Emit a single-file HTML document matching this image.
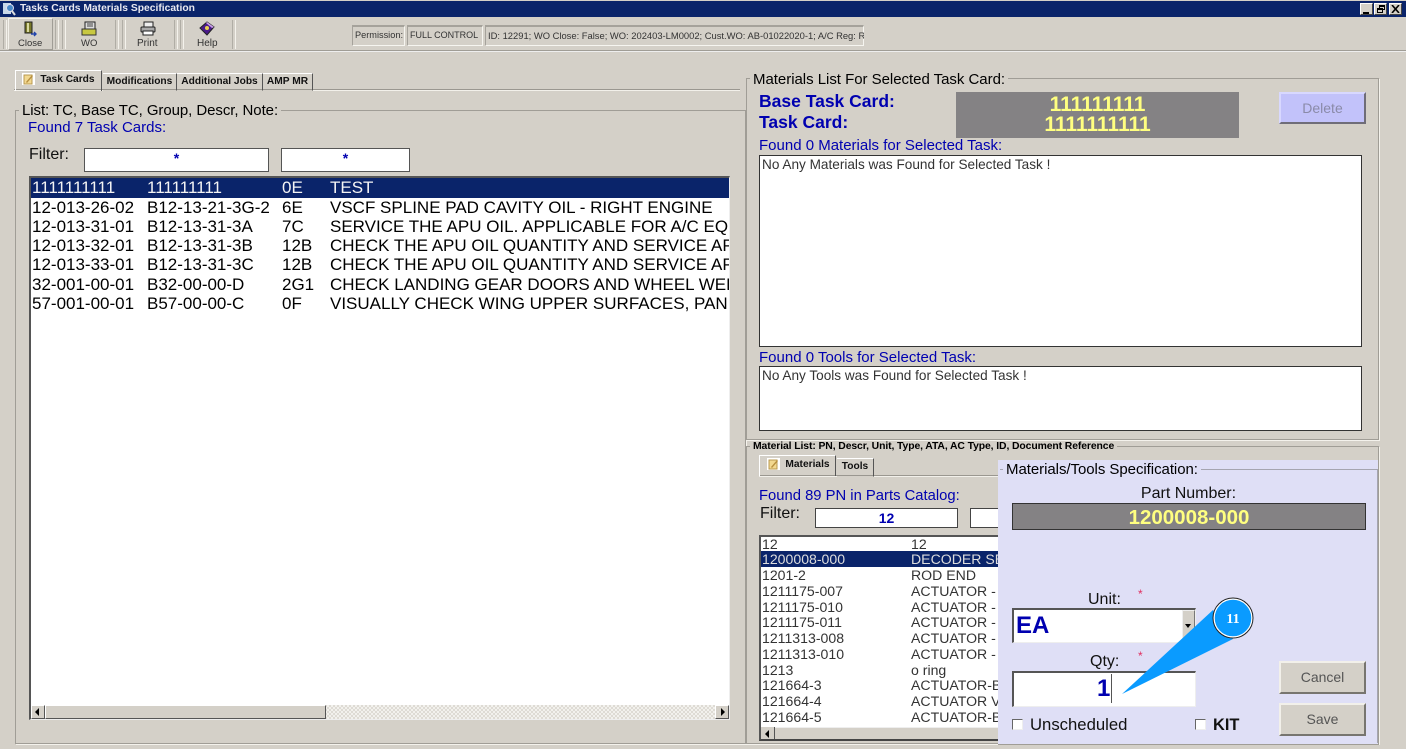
<!DOCTYPE html>
<html><head><meta charset="utf-8"><style>
html,body{margin:0;padding:0;width:1406px;height:749px;overflow:hidden;background:#d4d0c8;font-family:"Liberation Sans",sans-serif}
.a{position:absolute;box-sizing:border-box}
.t{position:absolute;white-space:nowrap;line-height:1}
.in{position:absolute;box-sizing:border-box;background:#fff;border:1px solid #555;border-right-color:#bbb;border-bottom-color:#eee;border-top:2px solid #555;border-left:2px solid #555}
.f{position:absolute;box-sizing:border-box;border:1px solid #a09d96;box-shadow:1px 1px 0 #f4f2ec}
.fd{position:absolute;box-sizing:border-box;border:1px solid;border-color:#a5a29b #f6f5f0 #f6f5f0 #a5a29b;border-top-width:2px}
.btn{position:absolute;box-sizing:border-box;border:2px solid;border-color:#f2f0ea #77756f #77756f #f2f0ea;background:#d4d0c8;text-align:center;color:#555;font-size:14px;line-height:28px}
.tb{position:absolute;top:20px;width:2px;height:29px;border-left:1px solid #b0ada5;border-right:1px solid #f4f2ec}
.lb{position:absolute;color:#000;font-size:15px;line-height:1;white-space:nowrap;background:#d4d0c8;padding:0 3px}
.row{position:absolute;height:19px;color:#000;font-size:17px;line-height:19px;white-space:nowrap;overflow:hidden}
.row span{position:absolute;top:0}
.r2{position:absolute;left:0;height:16px;width:300px;font-size:14.1px;line-height:16px;color:#333;white-space:nowrap;overflow:hidden}
.r2 span{position:absolute;top:0}
.tab{position:absolute;font-weight:bold;font-size:10.2px;color:#111;text-align:center;border:1px solid;border-color:#fff #555 #d4d0c8 #fff;white-space:nowrap}
</style></head><body>

<!-- title bar -->
<div class="a" style="left:0;top:1px;width:1406px;height:16px;background:#0a246a"></div>
<svg class="a" style="left:2px;top:2px" width="14" height="14" viewBox="0 0 14 14"><rect x="1" y="1" width="8" height="11" fill="#c8d8e8"/><circle cx="8" cy="6" r="3.5" fill="#4a8ac8" stroke="#dde"/><path d="M10 9l3 4" stroke="#ddd" stroke-width="2"/></svg>
<div class="t" style="left:20px;top:4px;font-size:10.3px;font-weight:bold;color:#e8e8f0">Tasks Cards Materials Specification</div>
<div class="a" style="left:1360px;top:3px;width:13px;height:12px;background:#d4d0c8;border:1px solid;border-color:#fff #444 #444 #fff"><div class="a" style="left:2px;top:8px;width:6px;height:2px;background:#000"></div></div>
<div class="a" style="left:1374px;top:3px;width:13px;height:12px;background:#d4d0c8;border:1px solid;border-color:#fff #444 #444 #fff"><div class="a" style="left:4px;top:1px;width:6px;height:5px;border:1px solid #000;border-top-width:2px"></div><div class="a" style="left:2px;top:4px;width:6px;height:5px;border:1px solid #000;border-top-width:2px;background:#d4d0c8"></div></div>
<div class="a" style="left:1389px;top:3px;width:13px;height:12px;background:#d4d0c8;border:1px solid;border-color:#fff #444 #444 #fff"><svg class="a" style="left:1px;top:1px" width="9" height="8" viewBox="0 0 9 8"><path d="M1 0l7 8M8 0l-7 8" stroke="#000" stroke-width="1.6"/></svg></div>

<!-- toolbar -->
<div class="a" style="left:0;top:50px;width:1406px;height:2px;background:#a09d96;border-bottom:1px solid #eee"></div>
<div class="a" style="left:8px;top:18px;width:45px;height:32px;border:1px solid;border-color:#f4f2ec #a09d96 #a09d96 #f4f2ec"></div>
<div class="tb" style="left:3px"></div><div class="tb" style="left:55px"></div><div class="tb" style="left:62px"></div><div class="tb" style="left:115px"></div><div class="tb" style="left:122px"></div><div class="tb" style="left:174px"></div><div class="tb" style="left:180px"></div><div class="tb" style="left:232px"></div>
<svg class="a" style="left:23px;top:21px" width="16" height="16" viewBox="0 0 16 16"><rect x="2" y="1" width="7" height="11" fill="#7a7a2a" stroke="#222"/><rect x="4" y="2" width="2" height="9" fill="#d8d8a0"/><path d="M8 13h5m-2-2l2 2-2 2" stroke="#2244aa" stroke-width="1.4" fill="none"/></svg>
<svg class="a" style="left:81px;top:21px" width="16" height="15" viewBox="0 0 16 15"><rect x="4" y="1" width="10" height="8" fill="#ddd" stroke="#222"/><path d="M6 3h6M6 5h6" stroke="#444"/><rect x="1" y="8" width="14" height="6" fill="#c8c840" stroke="#333"/></svg>
<svg class="a" style="left:140px;top:21px" width="16" height="15" viewBox="0 0 16 15"><rect x="4" y="1" width="9" height="5" fill="#eee" stroke="#222"/><rect x="1" y="6" width="14" height="5" rx="1" fill="#aaa" stroke="#222"/><rect x="3" y="10" width="10" height="4" fill="#fff" stroke="#222"/></svg>
<svg class="a" style="left:199px;top:21px" width="16" height="15" viewBox="0 0 16 15"><path d="M1 7l7-6 7 5-7 8z" fill="#4a1a8a" stroke="#222"/><path d="M8 1l7 5-2 1-6-5z" fill="#c8a0e8"/><circle cx="8" cy="7" r="2" fill="#e8d050"/></svg>
<div class="t" style="left:18px;top:38px;font-size:9.5px;color:#333;padding-top:1px">Close</div>
<div class="t" style="left:81px;top:38px;font-size:9.5px;color:#333;padding-top:1px">WO</div>
<div class="t" style="left:137px;top:38px;font-size:10px;color:#333;padding-top:1px">Print</div>
<div class="t" style="left:197px;top:38px;font-size:10px;color:#333;padding-top:1px">Help</div>

<div class="fd" style="left:352px;top:25px;width:53px;height:21px"></div>
<div class="t" style="left:355px;top:31px;font-size:9.2px;color:#333">Permission:</div>
<div class="fd" style="left:407px;top:25px;width:76px;height:21px"></div>
<div class="t" style="left:410px;top:31px;font-size:9px;color:#333">FULL CONTROL</div>
<div class="fd" style="left:485px;top:25px;width:379px;height:21px"></div>
<div class="a" style="left:488px;top:31px;width:376px;height:12px;overflow:hidden;font-size:9.4px;line-height:10px;color:#333;white-space:nowrap">ID: 12291; WO Close: False; WO: 202403-LM0002; Cust.WO: AB-01022020-1; A/C Reg: RA-89001</div>

<!-- left tabs -->
<div class="a" style="left:14px;top:89px;width:726px;height:2px;background:#9a9790;border-bottom:1px solid #f2f0ea"></div>
<div class="tab" style="left:15px;top:70px;width:87px;height:21px;line-height:18px;padding-left:18px;box-sizing:border-box;font-size:10.2px;border-bottom:none">Task Cards</div>
<svg class="a" style="left:21px;top:72px" width="15" height="14" viewBox="0 0 15 14"><rect x="1" y="1" width="13" height="12" fill="#fff"/><rect x="3" y="3" width="8" height="9" fill="#f2d890" stroke="#b89850"/><path d="M5 10l6-7 1 1-6 7z" fill="#b89040"/></svg>
<div class="tab" style="left:103px;top:73px;width:73px;height:16px;line-height:15px;border-left:none">Modifications</div>
<div class="tab" style="left:177px;top:73px;width:85px;height:16px;line-height:15px;border-left:none">Additional Jobs</div>
<div class="tab" style="left:263px;top:73px;width:49px;height:16px;line-height:15px;border-left:none">AMP MR</div>

<!-- left group -->
<div class="f" style="left:15px;top:110px;width:731px;height:634px"></div>
<div class="lb" style="left:19px;top:103px;letter-spacing:-.07px">List: TC, Base TC, Group, Descr, Note:</div>
<div class="t" style="left:28px;top:120px;font-size:15px;color:#0000b0">Found 7 Task Cards:</div>
<div class="t" style="left:29px;top:147px;font-size:16px;color:#111">Filter:</div>
<div class="in" style="left:84px;top:148px;width:185px;height:24px;border-width:1px;border-color:#555;text-align:center;color:#0000b0;font-size:14px;font-weight:bold;line-height:18px">*</div>
<div class="in" style="left:281px;top:148px;width:129px;height:24px;border-width:1px;border-color:#555;text-align:center;color:#0000b0;font-size:14px;font-weight:bold;line-height:18px">*</div>

<div class="in" style="left:29px;top:176px;width:701px;height:544px;overflow:hidden;border-right:1px solid #eee;border-bottom:1px solid #eee">
 <div class="row" style="top:0;height:20px;background:#0a246a;color:#f4f4f4;left:0;width:698px;line-height:20px"><span style="left:1px">1111111111</span><span style="left:116px">111111111</span><span style="left:251px">0E</span><span style="left:299px">TEST</span></div>
 <div class="row" style="top:20px;left:0;width:698px"><span style="left:1px">12-013-26-02</span><span style="left:116px">B12-13-21-3G-2</span><span style="left:251px">6E</span><span style="left:299px">VSCF SPLINE PAD CAVITY OIL - RIGHT ENGINE</span></div>
 <div class="row" style="top:39px;left:0;width:698px"><span style="left:1px">12-013-31-01</span><span style="left:116px">B12-13-31-3A</span><span style="left:251px">7C</span><span style="left:299px">SERVICE THE APU OIL. APPLICABLE FOR A/C EQUIPPED</span></div>
 <div class="row" style="top:58px;left:0;width:698px"><span style="left:1px">12-013-32-01</span><span style="left:116px">B12-13-31-3B</span><span style="left:251px">12B</span><span style="left:299px">CHECK THE APU OIL QUANTITY AND SERVICE APU OIL</span></div>
 <div class="row" style="top:77px;left:0;width:698px"><span style="left:1px">12-013-33-01</span><span style="left:116px">B12-13-31-3C</span><span style="left:251px">12B</span><span style="left:299px">CHECK THE APU OIL QUANTITY AND SERVICE APU OIL</span></div>
 <div class="row" style="top:97px;left:0;width:698px"><span style="left:1px">32-001-00-01</span><span style="left:116px">B32-00-00-D</span><span style="left:251px">2G1</span><span style="left:299px">CHECK LANDING GEAR DOORS AND WHEEL WELLS</span></div>
 <div class="row" style="top:116px;left:0;width:698px"><span style="left:1px">57-001-00-01</span><span style="left:116px">B57-00-00-C</span><span style="left:251px">0F</span><span style="left:299px">VISUALLY CHECK WING UPPER SURFACES, PANELS</span></div>
 <!-- scrollbar -->
 <div class="a" style="left:0;top:527px;width:698px;height:14px;background:repeating-conic-gradient(#dedbd4 0 25%,#f2f1ed 0 50%) 0 0/4px 4px"></div>
 <div class="a" style="left:0;top:527px;width:14px;height:14px;background:#d4d0c8;border:1px solid;border-color:#fff #555 #555 #fff"><div class="a" style="left:3px;top:2px;border:4px solid transparent;border-right-color:#000;border-left:none"></div></div>
 <div class="a" style="left:14px;top:527px;width:281px;height:14px;background:#d4d0c8;border:1px solid;border-color:#fff #555 #555 #fff"></div>
 <div class="a" style="left:684px;top:527px;width:14px;height:14px;background:#d4d0c8;border:1px solid;border-color:#fff #555 #555 #fff"><div class="a" style="left:5px;top:2px;border:4px solid transparent;border-left-color:#000;border-right:none"></div></div>
</div>

<!-- right top group -->
<div class="f" style="left:746px;top:78px;width:633px;height:362px"></div>
<div class="lb" style="left:750px;top:72px;letter-spacing:-.03px">Materials List For Selected Task Card:</div>
<div class="t" style="left:759px;top:93px;font-size:17.5px;font-weight:bold;color:#0000b0">Base Task Card:</div>
<div class="t" style="left:759px;top:114px;font-size:17.5px;font-weight:bold;color:#0000b0">Task Card:</div>
<div class="a" style="left:956px;top:92px;width:283px;height:46px;background:#848284"></div>
<div class="t" style="left:956px;top:94px;width:283px;text-align:center;font-size:21px;font-weight:bold;color:#ffff80">111111111</div>
<div class="t" style="left:956px;top:114px;width:283px;text-align:center;font-size:21px;font-weight:bold;color:#ffff80">1111111111</div>
<div class="btn" style="left:1279px;top:92px;width:87px;height:32px;background:#c2c2fa;color:#8a8aa8;border-color:#d8d8ff #6f6d78 #6f6d78 #d8d8ff">Delete</div>
<div class="t" style="left:759px;top:138px;font-size:15px;color:#0000b0">Found 0 Materials for Selected Task:</div>
<div class="a" style="left:759px;top:155px;width:603px;height:192px;background:#fff;border:1px solid #333;padding:1px 2px;font-size:13.6px;line-height:16px;color:#333">No Any Materials was Found for Selected Task !</div>
<div class="t" style="left:759px;top:350px;font-size:15px;color:#0000b0">Found 0 Tools for Selected Task:</div>
<div class="a" style="left:759px;top:366px;width:603px;height:65px;background:#fff;border:1px solid #333;padding:1px 2px;font-size:13.6px;line-height:16px;color:#333">No Any Tools was Found for Selected Task !</div>

<!-- right bottom group -->
<div class="f" style="left:746px;top:446px;width:633px;height:298px"></div>
<div class="lb" style="left:750px;top:442px;font-size:10.4px;font-weight:bold;letter-spacing:-.1px">Material List: PN, Descr, Unit, Type, ATA, AC Type, ID, Document Reference</div>
<div class="a" style="left:759px;top:475px;width:620px;height:2px;background:#9a9790;border-bottom:1px solid #f2f0ea"></div>
<div class="tab" style="left:759px;top:455px;width:77px;height:21px;line-height:17px;box-sizing:border-box;padding-left:20px;border-bottom:none">Materials</div>
<svg class="a" style="left:766px;top:457px" width="15" height="14" viewBox="0 0 15 14"><rect x="1" y="1" width="13" height="12" fill="#fff"/><rect x="3" y="3" width="8" height="9" fill="#f2d890" stroke="#b89850"/><path d="M5 10l6-7 1 1-6 7z" fill="#b89040"/></svg>
<div class="tab" style="left:837px;top:458px;width:36px;height:17px;line-height:15px;border-left:none">Tools</div>
<div class="t" style="left:759px;top:489px;font-size:14.8px;color:#0000b0">Found 89 PN in Parts Catalog:</div>
<div class="t" style="left:760px;top:506px;font-size:16px;color:#111">Filter:</div>
<div class="in" style="left:815px;top:508px;width:143px;height:20px;border-width:1px;border-color:#444;text-align:center;color:#0000b0;font-size:14px;font-weight:bold;line-height:18px">12</div>
<div class="in" style="left:970px;top:508px;width:40px;height:20px;border-width:1px;border-color:#444"></div>

<div class="in" style="left:759px;top:535px;width:250px;height:206px;overflow:hidden;border-bottom:2px solid #444">
 <div class="r2" style="top:-1px"><span style="left:1px">12</span><span style="left:150px">12</span></div>
 <div class="r2" style="top:14px;background:#0a246a;color:#ddd;width:250px"><span style="left:1px">1200008-000</span><span style="left:150px">DECODER SET</span></div>
 <div class="r2" style="top:30px"><span style="left:1px">1201-2</span><span style="left:150px">ROD END</span></div>
 <div class="r2" style="top:46px"><span style="left:1px">1211175-007</span><span style="left:150px">ACTUATOR - T</span></div>
 <div class="r2" style="top:62px"><span style="left:1px">1211175-010</span><span style="left:150px">ACTUATOR - T</span></div>
 <div class="r2" style="top:77px"><span style="left:1px">1211175-011</span><span style="left:150px">ACTUATOR - T</span></div>
 <div class="r2" style="top:93px"><span style="left:1px">1211313-008</span><span style="left:150px">ACTUATOR - T</span></div>
 <div class="r2" style="top:109px"><span style="left:1px">1211313-010</span><span style="left:150px">ACTUATOR - T</span></div>
 <div class="r2" style="top:125px"><span style="left:1px">1213</span><span style="left:150px">o ring</span></div>
 <div class="r2" style="top:140px"><span style="left:1px">121664-3</span><span style="left:150px">ACTUATOR-BR</span></div>
 <div class="r2" style="top:156px"><span style="left:1px">121664-4</span><span style="left:150px">ACTUATOR VA</span></div>
 <div class="r2" style="top:172px"><span style="left:1px">121664-5</span><span style="left:150px">ACTUATOR-BR</span></div>
 <div class="a" style="left:0;top:190px;width:250px;height:14px;background:#d4d0c8;border-bottom:1px solid #444;border-top:1px solid #eee"></div>
 <div class="a" style="left:0;top:190px;width:14px;height:14px;background:#d4d0c8;border-right:1px solid #555"><div class="a" style="left:4px;top:3px;border:4px solid transparent;border-right-color:#000;border-left:none"></div></div>
</div>

<!-- spec dialog -->
<div class="a" style="left:998px;top:460px;width:381px;height:285px;background:#dfdff6;border-right:1px solid #a09d96;border-bottom:1px solid #a09d96"></div>
<div class="a" style="left:1000px;top:469px;width:378px;height:274px;border:1px solid #a5a5b0;border-left:none;border-bottom:none"></div>
<div class="lb" style="left:1003px;top:462px;background:#dfdff6;letter-spacing:-.05px">Materials/Tools Specification:</div>
<div class="t" style="left:998px;top:486px;width:381px;text-align:center;font-size:16px;color:#111">Part Number:</div>
<div class="a" style="left:1012px;top:503px;width:354px;height:27px;background:#848284;border:1px solid #333"></div>
<div class="t" style="left:1012px;top:508px;width:354px;text-align:center;font-size:20.5px;font-weight:bold;color:#ffff80">1200008-000</div>

<div class="t" style="left:1088px;top:592px;font-size:16px;color:#111">Unit:</div>
<div class="t" style="left:1138px;top:588px;font-size:12px;color:#e03060">*</div>
<div class="in" style="left:1012px;top:608px;width:184px;height:35px;border-bottom:1px solid #eee;border-right:1px solid #eee;border-top:2px solid #555"></div>
<div class="t" style="left:1016px;top:614px;font-size:24px;font-weight:bold;color:#0000b0">EA</div>
<div class="a" style="left:1182px;top:610px;width:13px;height:32px;background:#d4d0c8;border:1px solid;border-color:#eee #777 #777 #eee"><div class="a" style="left:2px;top:13px;border:3px solid transparent;border-top:4px solid #000;border-bottom:none"></div></div>

<div class="t" style="left:1090px;top:654px;font-size:16px;color:#111">Qty:</div>
<div class="t" style="left:1138px;top:650px;font-size:12px;color:#e03060">*</div>
<div class="in" style="left:1012px;top:671px;width:184px;height:36px;border-bottom:1px solid #eee;border-right:1px solid #eee"></div>
<div class="t" style="left:1097px;top:677px;font-size:24px;font-weight:bold;color:#0000b0">1</div>
<div class="a" style="left:1111px;top:674px;width:1px;height:29px;background:#555"></div>

<div class="a" style="left:1012px;top:719px;width:11px;height:11px;background:#fff;border:1px solid;border-color:#666 #eee #eee #666"></div>
<div class="t" style="left:1030px;top:717px;font-size:16.7px;color:#111">Unscheduled</div>
<div class="a" style="left:1195px;top:719px;width:11px;height:11px;background:#fff;border:1px solid;border-color:#666 #eee #eee #666"></div>
<div class="t" style="left:1213px;top:717px;font-size:16.4px;font-weight:bold;color:#111">KIT</div>

<div class="btn" style="left:1279px;top:661px;width:87px;height:33px;line-height:29px">Cancel</div>
<div class="btn" style="left:1279px;top:703px;width:87px;height:33px;line-height:29px">Save</div>

<!-- callout -->
<svg class="a" style="left:1110px;top:590px" width="160" height="115" viewBox="0 0 160 115">
<path d="M103 20L12 104 123 49z" fill="#0a9bff"/>
<circle cx="123" cy="28" r="19" fill="#0a9bff" stroke="#fff" stroke-width="1.5"/>
<circle cx="123" cy="28" r="20" fill="none" stroke="#222" stroke-width="1"/>
<text x="123" y="33" text-anchor="middle" font-family="Liberation Serif,serif" font-size="14" font-weight="bold" fill="#fff">11</text>
</svg>
</body></html>
